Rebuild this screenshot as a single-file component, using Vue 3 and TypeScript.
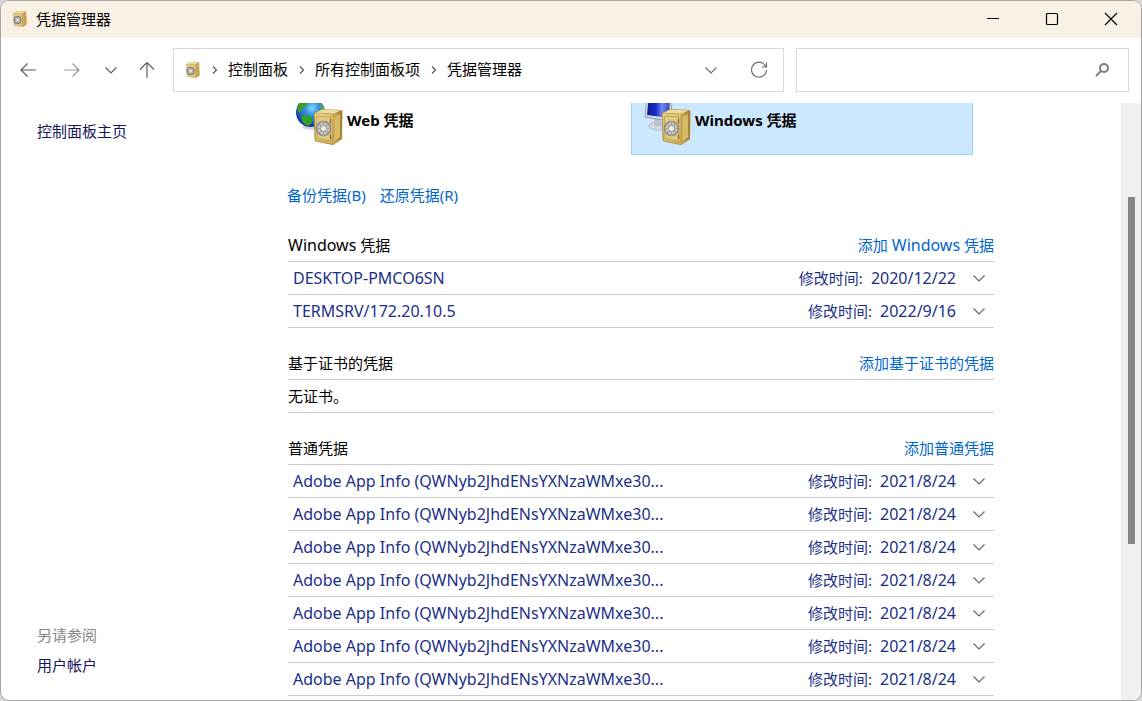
<script setup lang="ts">
interface Credential {
  name: string
  modified: string
}
interface Section {
  title: string
  action: string
  empty?: string
  items: Credential[]
}
interface Run {
  text: string
  latin: boolean
}

const crumbs: string[] = ['控制面板', '所有控制面板项', '凭据管理器']

const sections: Section[] = [
  {
    title: 'Windows 凭据',
    action: '添加 Windows 凭据',
    items: [
      { name: 'DESKTOP-PMCO6SN', modified: '2020/12/22' },
      { name: 'TERMSRV/172.20.10.5', modified: '2022/9/16' },
    ],
  },
  { title: '基于证书的凭据', action: '添加基于证书的凭据', empty: '无证书。', items: [] },
  {
    title: '普通凭据',
    action: '添加普通凭据',
    items: Array.from({ length: 7 }, () => ({
      name: 'Adobe App Info (QWNyb2JhdENsYXNzaWMxe30...',
      modified: '2021/8/24',
    })),
  },
]

// Latin words are set one size larger than the Chinese text around them.
function runs(text: string): Run[] {
  return text
    .split(/([A-Za-z]+)/)
    .filter((part) => part !== '')
    .map((part) => ({ text: part, latin: /^[A-Za-z]/.test(part) }))
}
</script>

<template>
  <div class="window">
    <svg class="defs" width="0" height="0" aria-hidden="true">
      <defs>
        <linearGradient id="front" x1="0" y1="0" x2="1" y2="1">
          <stop offset="0" stop-color="#ecd892" />
          <stop offset="0.5" stop-color="#dcc070" />
          <stop offset="1" stop-color="#cba954" />
        </linearGradient>
        <linearGradient id="side" x1="0" y1="0" x2="1" y2="0">
          <stop offset="0" stop-color="#cfae58" />
          <stop offset="1" stop-color="#a37f2e" />
        </linearGradient>
        <radialGradient id="ocean" cx="0.55" cy="0.35" r="0.65">
          <stop offset="0" stop-color="#7fd4fb" />
          <stop offset="0.45" stop-color="#2c86dc" />
          <stop offset="1" stop-color="#15319a" />
        </radialGradient>
        <linearGradient id="screen" x1="0" y1="0" x2="1" y2="0">
          <stop offset="0" stop-color="#0b1a94" />
          <stop offset="0.4" stop-color="#1c2fd0" />
          <stop offset="0.65" stop-color="#7385f0" />
          <stop offset="1" stop-color="#3346cf" />
        </linearGradient>
        <symbol id="safe" viewBox="0 0 30 38">
          <path d="M1 5 L9 1 L28 2 Q29.500 2 29.500 4 L29 31 L20 37 L3 33.500 Q1.500 33 1.500 31 Z" fill="#a98a40" />
          <path d="M2 5 L9.500 1.500 L28 2.500 L20 6 Z" fill="#efdd9f" />
          <path d="M20 6 L28.500 2.500 L28.500 31 L20 36.500 Z" fill="url(#side)" />
          <path d="M21.500 9 L27 6 L27 29.500 L21.500 33 Z" fill="#d6ba66" />
          <path d="M1.500 5 L20 6 L20 36.500 L2.500 33 Z" fill="url(#front)" stroke="#b4954a" stroke-width="0.600" />
          <path d="M3.500 8 L17.500 9 L17.500 33 L4 30.500 Z" fill="#e0c880" stroke="#b89a50" stroke-width="0.700" />
          <path d="M17.500 11v4M17.500 27v4" stroke="#8c7330" stroke-width="1.400" />
          <circle cx="10.500" cy="20.500" r="7" fill="#cfc7aa" stroke="#8c8c8e" stroke-width="1.600" />
          <path d="M10.500 13v15M4 20.500h13M6 16l9 9M15 16l-9 9" stroke="#a2a2a6" stroke-width="1.200" />
          <circle cx="10.500" cy="20.500" r="3" fill="#ededef" stroke="#8c8c8e" stroke-width="0.900" />
        </symbol>
        <symbol id="safe-small" viewBox="0 0 16 18">
          <path d="M1.500 3 L5 1 L14 1.500 L14.500 14.500 L10.500 17 L2 15.500 Z" fill="#a98a40" />
          <path d="M1.500 3 L5 1 L14 1.500 L10.500 3.500 Z" fill="#efdd9f" />
          <path d="M10.500 3.500 L14 1.500 L14.500 14.500 L10.500 17 Z" fill="#c8a650" />
          <path d="M1.500 3 L10.500 3.500 L10.500 17 L2 15.500 Z" fill="#dfc67c" />
          <circle cx="5.500" cy="10" r="3.500" fill="#c9c6ba" stroke="#77777a" stroke-width="1.200" />
          <path d="M5.500 7.500v5M3 10h5" stroke="#88888c" stroke-width="0.800" />
          <circle cx="5.500" cy="10" r="1.200" fill="#f0f0f2" />
        </symbol>
        <symbol id="chev" viewBox="0 0 14 14">
          <path d="M1.500 4.500 L7 10 L12.500 4.500" fill="none" stroke="currentColor" stroke-width="1.200" />
        </symbol>
      </defs>
    </svg>

    <header class="titlebar">
      <svg class="mini" aria-hidden="true"><use href="#safe-small" /></svg>
      <h1>凭据管理器</h1>
      <div class="controls">
        <button type="button" aria-label="最小化">
          <svg width="14" height="14" viewBox="0 0 14 14"><path d="M1 6.500h12" stroke="#000" fill="none" /></svg>
        </button>
        <button type="button" aria-label="最大化">
          <svg width="14" height="14" viewBox="0 0 14 14"><rect x="1.500" y="1.500" width="11" height="11" rx="1" stroke="#000" stroke-width="1.200" fill="none" /></svg>
        </button>
        <button type="button" aria-label="关闭">
          <svg width="14" height="14" viewBox="0 0 14 14"><path d="M1 1l12 12M13 1L1 13" stroke="#000" stroke-width="1.200" fill="none" /></svg>
        </button>
      </div>
    </header>

    <div class="toolbar">
      <nav class="history" aria-label="导航">
        <button type="button" aria-label="后退">
          <svg width="18" height="18" viewBox="0 0 18 18"><path d="M17 9H1.500M8.500 2.500L2 9l6.500 6.500" /></svg>
        </button>
        <button type="button" class="faint" aria-label="前进">
          <svg width="18" height="18" viewBox="0 0 18 18"><path d="M1 9h15.500M9.500 2.500L16 9l-6.500 6.500" /></svg>
        </button>
        <button type="button" class="narrow" aria-label="最近位置">
          <svg width="14" height="14"><use href="#chev" /></svg>
        </button>
        <button type="button" class="up" aria-label="上移">
          <svg width="18" height="18" viewBox="0 0 18 18"><path d="M9 17V1.500M2 8.500L9 1.500l7 7" /></svg>
        </button>
      </nav>
      <div class="address">
        <svg class="mini" aria-hidden="true"><use href="#safe-small" /></svg>
        <template v-for="crumb in crumbs" :key="crumb">
          <svg class="sep" width="8" height="10" viewBox="0 0 8 10" aria-hidden="true"><path d="M2 1.500L5.500 5L2 8.500" /></svg>
          <a href="#">{{ crumb }}</a>
        </template>
        <div class="address-tools">
          <button type="button" aria-label="以前的位置">
            <svg width="14" height="14"><use href="#chev" /></svg>
          </button>
          <button type="button" aria-label="刷新">
            <svg width="18" height="18" viewBox="0 0 18 18"><path d="M16 6A7.500 7.500 0 1 0 16.500 9M16.500 1.500V6H12" /></svg>
          </button>
        </div>
      </div>
      <label class="search">
        <input type="search" aria-label="搜索控制面板" />
        <svg width="16" height="16" viewBox="0 0 16 16" aria-hidden="true"><circle cx="10" cy="6" r="4" /><path d="M7 9L2 14" /></svg>
      </label>
    </div>

    <div class="body">
      <aside class="sidebar">
        <a href="#">控制面板主页</a>
        <div class="related">
          <h2>另请参阅</h2>
          <a href="#">用户帐户</a>
        </div>
      </aside>

      <main class="content">
        <div class="tiles">
          <button type="button" class="tile">
            <svg width="48" height="43" viewBox="0 5 48 43" aria-hidden="true">
              <ellipse cx="17" cy="29" rx="11" ry="3" fill="#d5d5d5" />
              <circle cx="14.500" cy="14.500" r="14.500" fill="url(#ocean)" />
              <path d="M2 6 Q8 3 12 4 Q11 9 7 10 Q6 14 3 15 Q0 12 2 6Z" fill="#3f9d2f" />
              <path d="M5 18 Q12 15 17 20 Q17 26 12 28 Q6 26 5 18Z" fill="#35a02c" />
              <path d="M23 5 Q28 8 28 14 L25 12Z" fill="#4dae38" />
              <use href="#safe" x="17" y="10" width="30" height="38" />
            </svg>
            <span>Web 凭据</span>
          </button>
          <button type="button" class="tile selected">
            <svg width="48" height="43" viewBox="0 5 48 43" aria-hidden="true">
              <ellipse cx="14" cy="28" rx="9" ry="4" fill="#d3d9de" stroke="#b2bcc5" />
              <path d="M10 20h9v8h-9z" fill="#b9c3cc" />
              <path d="M3 0 L28 1 L27 23 L1 19Z" fill="#dfe5ea" stroke="#8e98a2" />
              <path d="M4.500 1 L26 2 L25 20 L3 17Z" fill="url(#screen)" />
              <use href="#safe" x="17" y="10" width="30" height="38" />
            </svg>
            <span>Windows 凭据</span>
          </button>
        </div>

        <div class="vault-links">
          <a href="#">备份凭据(B)</a>
          <a href="#">还原凭据(R)</a>
        </div>

        <section v-for="section in sections" :key="section.title" class="group">
          <div class="group-head">
            <h2><span v-for="(run, i) in runs(section.title)" :key="i" :class="{ latin: run.latin }">{{ run.text }}</span></h2>
            <a href="#"><span v-for="(run, i) in runs(section.action)" :key="i" :class="{ latin: run.latin }">{{ run.text }}</span></a>
          </div>
          <p v-if="section.empty" class="empty">{{ section.empty }}</p>
          <button v-for="(item, i) in section.items" :key="i" type="button" class="row">
            <span class="name latin">{{ item.name }}</span>
            <span>修改时间:</span>
            <span class="date latin">{{ item.modified }}</span>
            <svg width="14" height="14" aria-hidden="true"><use href="#chev" /></svg>
          </button>
        </section>
      </main>

      <div class="scrollbar" aria-hidden="true"><div class="thumb"></div></div>
    </div>
  </div>
</template>

<style>
body {
  margin: 0;
  background: #d6d8da;
}
</style>

<style scoped>
.window {
  box-sizing: border-box;
  height: 100vh;
  display: flex;
  flex-direction: column;
  overflow: hidden;
  border: 1px solid #a6a6a6;
  border-radius: 9px;
  background: #fff;
  color: #000;
  font: 15px/24px "Noto Sans", "Noto Sans CJK SC", sans-serif;
}
.defs {
  position: absolute;
}
button {
  padding: 0;
  border: 0;
  background: none;
  font: inherit;
  color: inherit;
}
a {
  color: #0066cc;
  text-decoration: none;
}
h1,
h2,
p {
  margin: 0;
  font: inherit;
}
.latin {
  font-size: 16px;
}
.mini {
  width: 16px;
  height: 18px;
}
.titlebar {
  box-sizing: border-box;
  flex: none;
  display: flex;
  align-items: center;
  height: 37px;
  padding: 0 1px 2px 11px;
  background: #f9f1e6;
}
.titlebar h1 {
  margin-left: 8px;
}
.controls {
  display: flex;
  margin-left: auto;
  align-self: stretch;
}
.controls button {
  display: grid;
  place-items: center;
  width: 59px;
}
.toolbar {
  flex: none;
  display: flex;
  align-items: center;
  padding: 10px 12px 11px 5px;
}
.history {
  display: flex;
  width: 167px;
}
.history button {
  display: grid;
  place-items: center;
  width: 44px;
  height: 44px;
  color: #5c5c5c;
}
.history .narrow {
  width: 34px;
}
.history .up {
  width: 38px;
}
.history .faint {
  color: #9a9a9a;
}
.toolbar path,
.toolbar circle {
  stroke: currentColor;
  fill: none;
  stroke-width: 1.2;
}
.address,
.search {
  box-sizing: border-box;
  display: flex;
  align-items: center;
  height: 44px;
  border: 1px solid #d9d9d9;
}
.address {
  flex: 1;
  padding-left: 11px;
}
.address a {
  padding-bottom: 2px;
  color: #000;
}
.sep {
  margin: 0 9px 0 10px;
  color: #555;
}
.address-tools {
  display: flex;
  margin-left: auto;
  color: #6b6b6b;
}
.address-tools button {
  display: grid;
  place-items: center;
  width: 48px;
  height: 42px;
}
.search {
  width: 333px;
  margin-left: 12px;
  padding-right: 18px;
  color: #7b7b7b;
}
.search input {
  flex: 1;
  min-width: 0;
  height: 40px;
  padding: 0 12px;
  border: 0;
  outline: 0;
  background: none;
  font: inherit;
}
.search circle,
.search path {
  stroke-width: 2;
}
.body {
  flex: 1;
  min-height: 0;
  display: flex;
  overflow: hidden;
}
.sidebar {
  box-sizing: border-box;
  flex: none;
  display: flex;
  flex-direction: column;
  justify-content: space-between;
  width: 282px;
  padding: 16px 0 23px 36px;
}
.sidebar a {
  color: #14145a;
}
.related {
  display: grid;
  gap: 6px;
}
.related h2 {
  color: #858585;
}
.content {
  flex: 1;
  max-width: 711px;
}
.tiles {
  display: grid;
  grid-template-columns: 342px 342px;
  gap: 6px;
}
.tile {
  box-sizing: border-box;
  display: flex;
  gap: 3px;
  height: 52px;
  padding-left: 12px;
  border: 1px solid transparent;
  border-top: 0;
  font-weight: 700;
  text-align: left;
}
.tile span {
  margin-top: 5px;
}
.tile.selected {
  border-color: #99d1ff;
  background: #cce8ff;
}
.vault-links {
  display: flex;
  gap: 14px;
  margin: 28px 0 22px 4px;
}
.group {
  margin: 0 0 19px 5px;
}
.group-head,
.empty,
.row {
  box-sizing: border-box;
  display: flex;
  align-items: center;
  width: 100%;
  height: 33px;
  border-bottom: 1px solid #cbcbcb;
}
.group-head {
  justify-content: space-between;
}
.group-head span {
  white-space: pre;
}
.row {
  padding: 0 8px 0 5px;
  color: #1c2f87;
}
.name {
  flex: 1;
  text-align: left;
}
.date {
  margin: 0 16px 0 8px;
}
.row svg {
  color: #666;
}
.scrollbar {
  box-sizing: border-box;
  width: 20px;
  margin-left: auto;
  padding: 94px 6px 156px 7px;
  background: #f0f0f0;
}
.thumb {
  height: 100%;
  background: #858585;
}
</style>
